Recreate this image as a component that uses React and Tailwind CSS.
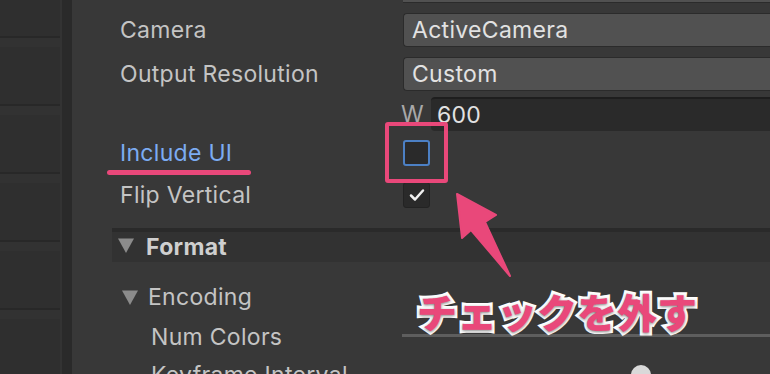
import { Fragment } from 'react';

const font = { fontFamily: 'Inter, "Noto Sans", sans-serif' };

const LEFT_ROWS = [0, 1, 2, 3, 4, 5];

function Tri({ className }) {
  return (
    <svg className={className} width="16" height="15" viewBox="0 0 16 15">
      <path d="M0 0.5 H16 L8 15 Z" fill="#8b8b8b" />
    </svg>
  );
}

function Field({ children }) {
  return (
    <div className="h-[34px] flex items-center px-[8px] rounded-[4px] rounded-r-none bg-[#515151] border border-r-0 border-[#2b2b2b] text-[23px] tracking-[0.3px] text-[#e2e2e2]">
      {children}
    </div>
  );
}

function Row({ label, h = 'h-[36px]', labelCls = 'text-[#c4c4c4]', children }) {
  return (
    <div className={`shrink-0 flex items-center ${h}`}>
      <div className={`w-[331px] shrink-0 pl-[48px] text-[23px] tracking-[0.3px] whitespace-nowrap ${labelCls}`}>{label}</div>
      <div className="flex-1 min-w-0">{children}</div>
    </div>
  );
}

export default function App() {
  return (
    <div className="relative w-[770px] h-[374px] overflow-hidden bg-[#383838] flex" style={font}>
      {/* left list panel */}
      <div className="w-[60px] shrink-0 bg-[#2b2b2b] flex flex-col">
        <div className="shrink-0 h-[36px] bg-[#2f2f2f]" />
        {LEFT_ROWS.map((i) => (
          <Fragment key={i}>
            <div className="shrink-0 h-[2px] bg-[#282828]" />
            <div className="shrink-0 h-[9px] bg-[#323232]" />
            <div className="shrink-0 h-[57px] bg-[#2f2f2f]" />
          </Fragment>
        ))}
      </div>
      <div className="w-[2px] shrink-0 bg-[#333333]" />
      <div className="w-[10px] shrink-0 bg-[#2a2a2a]" />

      {/* inspector */}
      <div className="flex-1 min-w-0 flex flex-col">
        <div className="shrink-0 ml-[331px] h-[3px] bg-[#515151] border-b border-[#2b2b2b]" />

        <div className="shrink-0 mt-[9px]">
          <Row label="Camera">
            <Field>ActiveCamera</Field>
          </Row>
        </div>
        <div className="shrink-0 mt-[8px]">
          <Row label="Output Resolution">
            <Field>Custom</Field>
          </Row>
        </div>
        <div className="shrink-0 mt-[4px]">
          <Row label="">
            <div className="flex items-center">
              <span className="w-[30px] shrink-0 text-[23px] text-[#a8a8a8] ml-[-2px]">W</span>
              <div className="flex-1 h-[34px] flex items-center px-[6px] rounded-l-[4px] bg-[#2a2a2a] border-t-2 border-[#1e1e1e] text-[23px] tracking-[0.3px] text-[#e2e2e2]">
                600
              </div>
            </div>
          </Row>
        </div>
        <div className="shrink-0 mt-[4px]">
          <Row label="Include UI" h="h-[34px]" labelCls="text-[#7cacf2]">
            <div className="w-[27px] h-[26px] rounded-[3px] bg-[#2a2a2a] border-2 border-[#4c80c4]" />
          </Row>
        </div>
        <div className="shrink-0 mt-[8px]">
          <Row label="Flip Vertical" h="h-[34px]">
            <div className="w-[27px] h-[26px] rounded-[3px] bg-[#2a2a2a] border border-[#232323] flex items-center justify-center">
              <svg width="16" height="14" viewBox="0 0 16 14">
                <path d="M2 7.5 L6 11.5 L14 2.5" fill="none" stroke="#f0f0f0" strokeWidth="2.5" strokeLinecap="round" strokeLinejoin="round" />
              </svg>
            </div>
          </Row>
        </div>

        {/* Format section */}
        <div className="shrink-0 mt-[16px] ml-[40px] h-[4px] bg-[#2a2a2a]" />
        <div className="shrink-0 ml-[40px] h-[30px] bg-[#323232] flex items-center">
          <Tri className="ml-[6px] mr-[12px] mt-[-3px]" />
          <span className="text-[23px] font-bold tracking-[0.3px] text-[#cfcfcf]">Format</span>
        </div>

        <div className="shrink-0 mt-[18px] h-[34px] flex items-center pl-[50px]">
          <Tri className="mr-[10px]" />
          <span className="text-[23px] tracking-[0.3px] text-[#c4c4c4]">Encoding</span>
        </div>
        <div className="shrink-0 mt-[6px] h-[34px] flex items-center">
          <div className="w-[330px] shrink-0 pl-[79px] text-[23px] tracking-[0.3px] text-[#c4c4c4] whitespace-nowrap">Num Colors</div>
          <div className="flex-1 h-[3px] mt-[-3px] bg-[#5e5e5e]" />
        </div>
        <div className="shrink-0 mt-[4px] h-[34px] flex items-center">
          <div className="w-[330px] shrink-0 pl-[79px] text-[23px] tracking-[0.3px] text-[#c4c4c4] whitespace-nowrap">Keyframe Interval</div>
          <div className="ml-[229px] w-[20px] h-[20px] rounded-full bg-[#d9d9d9]" />
        </div>
      </div>

      {/* annotations */}
      <div className="absolute left-[107px] top-[170px] w-[144px] h-[5px] rounded-full bg-[#e9487a]" />
      <div className="absolute left-[385px] top-[122px] w-[63px] h-[61px] rounded-[3px] border-[4px] border-[#e9487a]" />
      <svg className="absolute left-0 top-0" width="770" height="374" viewBox="0 0 770 374">
        <path
          d="M457 194 L496 215 L485 222 L510 276 L471 230 L462 238 Z"
          fill="#e9487a"
          stroke="#e9487a"
          strokeWidth="2"
          strokeLinejoin="round"
        />
      </svg>
      <div
        className="absolute left-[417px] top-[291px] text-[40px] leading-none font-black text-[#e9487a] [-webkit-text-stroke:6px_#ffffff] [paint-order:stroke_fill] [text-shadow:0_1px_3px_rgba(0,0,0,0.5)] whitespace-nowrap"
        style={{ fontFamily: '"Noto Sans CJK JP", sans-serif' }}
      >
        チェックを外す
      </div>
    </div>
  );
}
